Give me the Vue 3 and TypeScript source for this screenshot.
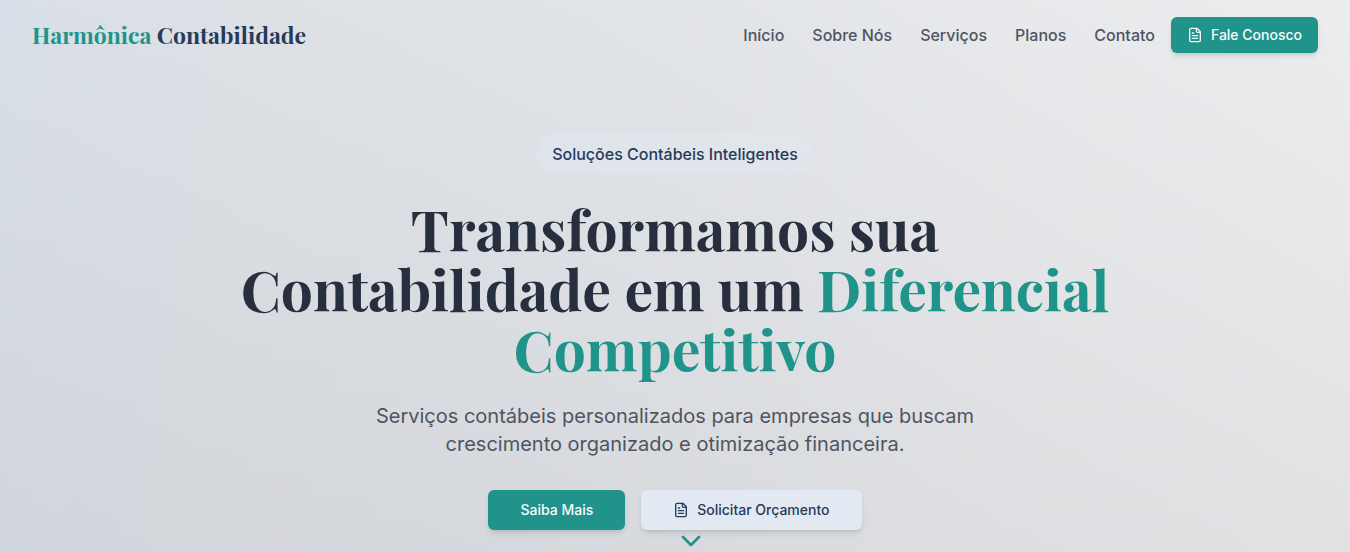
<script setup lang="ts">
interface NavItem {
  label: string
  href: string
}

const navItems: NavItem[] = [
  { label: 'Início', href: '#inicio' },
  { label: 'Sobre Nós', href: '#sobre' },
  { label: 'Serviços', href: '#servicos' },
  { label: 'Planos', href: '#planos' },
  { label: 'Contato', href: '#contato' },
]
</script>

<template>
  <div id="inicio" class="page">
    <header class="header">
      <a class="brand" href="#inicio"><span class="accent">Harmônica</span> Contabilidade</a>
      <div class="header-end">
        <nav class="nav" aria-label="Principal">
          <a v-for="item in navItems" :key="item.href" :href="item.href">{{ item.label }}</a>
        </nav>
        <button type="button" class="button primary compact">
          <svg class="icon" viewBox="0 0 24 24" aria-hidden="true">
            <path d="M15 2H6a2 2 0 0 0-2 2v16a2 2 0 0 0 2 2h12a2 2 0 0 0 2-2V7Z" />
            <path d="M14 2v4a2 2 0 0 0 2 2h4M10 9H8M16 13H8M16 17H8" />
          </svg>
          Fale Conosco
        </button>
      </div>
    </header>

    <main class="hero">
      <span class="badge">Soluções Contábeis Inteligentes</span>
      <h1 class="title">
        Transformamos sua Contabilidade em um <span class="accent">Diferencial Competitivo</span>
      </h1>
      <p class="lead">
        Serviços contábeis personalizados para empresas que buscam crescimento organizado e
        otimização financeira.
      </p>
      <div class="actions">
        <button type="button" class="button primary">Saiba Mais</button>
        <button type="button" class="button secondary">
          <svg class="icon" viewBox="0 0 24 24" aria-hidden="true">
            <path d="M15 2H6a2 2 0 0 0-2 2v16a2 2 0 0 0 2 2h12a2 2 0 0 0 2-2V7Z" />
            <path d="M14 2v4a2 2 0 0 0 2 2h4M10 9H8M16 13H8M16 17H8" />
          </svg>
          Solicitar Orçamento
        </button>
      </div>
    </main>

    <a class="scroll-cue" href="#sobre" aria-label="Rolar para baixo">
      <svg viewBox="0 0 24 24" aria-hidden="true"><path d="m6 9 6 6 6-6" /></svg>
    </a>
  </div>
</template>

<style>
body {
  margin: 0;
}
</style>

<style scoped>
.page {
  position: relative;
  box-sizing: border-box;
  min-height: 100vh;
  overflow: hidden;
  font-family: Inter, 'Liberation Sans', sans-serif;
  font-size: 16px;
  line-height: 24px;
  color: #4f5462;
  background:
    linear-gradient(to bottom, rgba(150, 150, 155, 0) 0%, rgba(150, 150, 155, 0.14) 100%),
    linear-gradient(98deg, #d9dfe8 0%, #dde1e6 16%, #e0e3e7 40%, #e6e8eb 66%, #eeeeef 100%);
}

.header {
  display: flex;
  align-items: center;
  justify-content: space-between;
  padding: 17px 32px;
}

.brand {
  font-family: 'Playfair Display', 'Liberation Serif', serif;
  font-size: 23px;
  font-weight: 700;
  line-height: 32px;
  color: #263b59;
  text-decoration: none;
}

.accent {
  color: #20948a;
}

.header-end {
  display: flex;
  align-items: center;
  gap: 16px;
}

.nav {
  display: flex;
  gap: 28px;
}

.nav a {
  font-weight: 500;
  color: #4f5462;
  text-decoration: none;
}

.button {
  display: inline-flex;
  align-items: center;
  justify-content: center;
  gap: 8px;
  height: 40px;
  padding: 0 32px;
  border: 0;
  border-radius: 6px;
  font-family: inherit;
  font-size: 14px;
  font-weight: 500;
  line-height: 20px;
  cursor: pointer;
  box-shadow:
    0 4px 6px -1px rgba(0, 0, 0, 0.1),
    0 2px 4px -2px rgba(0, 0, 0, 0.1);
}

.compact {
  height: 36px;
  padding: 0 16px;
}

.primary {
  color: #f8fafc;
  background: #20948a;
}

.secondary {
  color: #263b59;
  background: #e2e9f2;
}

.icon {
  width: 16px;
  height: 16px;
}

svg {
  display: block;
  fill: none;
  stroke: currentColor;
  stroke-width: 2;
  stroke-linecap: round;
  stroke-linejoin: round;
}

.hero {
  display: flex;
  flex-direction: column;
  align-items: center;
  padding: 64px 32px 22px;
  text-align: center;
}

.badge {
  padding: 8px 16px;
  border-radius: 20px;
  font-weight: 500;
  color: #263b59;
  background: rgba(226, 232, 242, 0.5);
}

.title {
  max-width: 896px;
  margin: 24px 0;
  font-family: 'Playfair Display', 'Liberation Serif', serif;
  font-size: 57px;
  font-weight: 700;
  line-height: 60px;
  color: #272f3e;
}

.lead {
  max-width: 672px;
  margin: 0 0 32px;
  font-size: 20px;
  line-height: 28px;
}

.actions {
  display: flex;
  gap: 16px;
}

.scroll-cue {
  position: absolute;
  bottom: -5px;
  left: 50%;
  color: #20948a;
}

.scroll-cue svg {
  width: 32px;
  height: 32px;
}
</style>
